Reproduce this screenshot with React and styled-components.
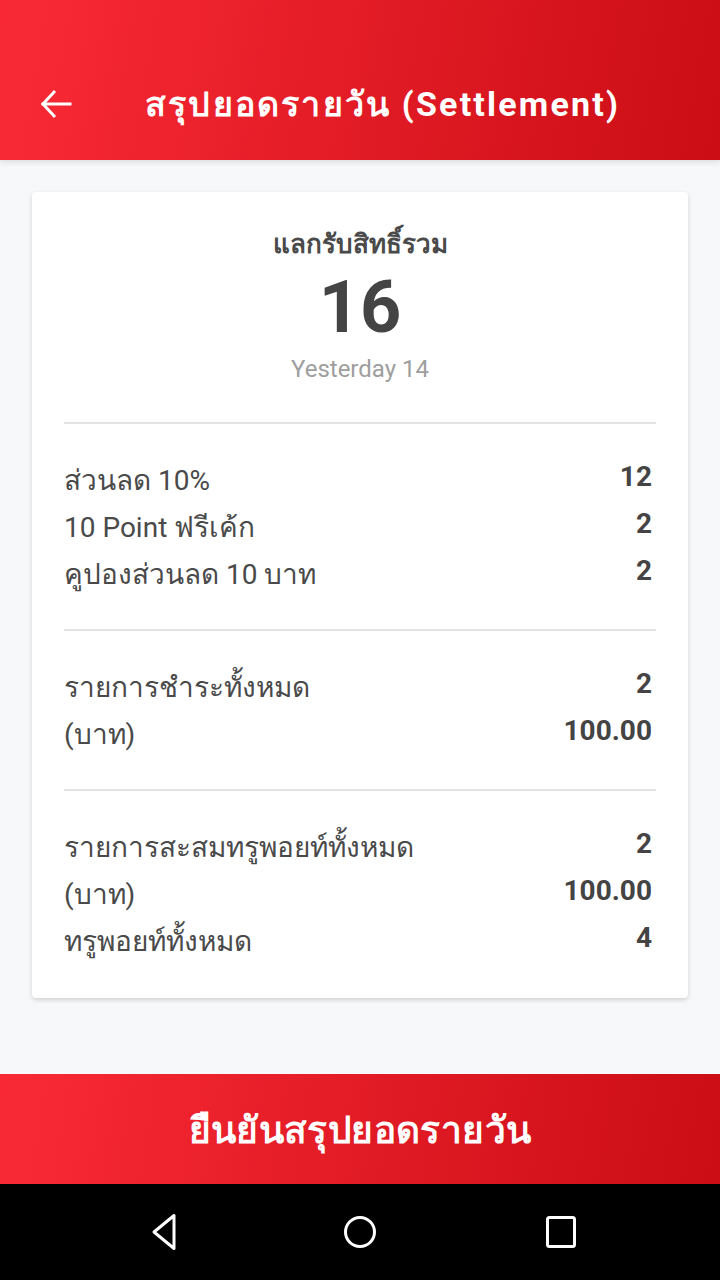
import styled, { createGlobalStyle } from "styled-components"

const GlobalStyle = createGlobalStyle`
    body {
        margin: 0;
        background: #f7f8fa;
        font-family: Roboto, "Noto Sans", "DejaVu Sans", sans-serif;
    }
`
const Page = styled.div`
    display: flex;
    flex-direction: column;
    min-height: 100vh;
    background: #f7f8fa;
`
const Header = styled.header`
    display: flex;
    align-items: center;
    height: 160px;
    box-sizing: border-box;
    padding: 48px 0 0 40px;
    background: linear-gradient(100deg, #f92a36 0%, #cb0d15 100%);
    box-shadow: 0 2px 6px rgba(0, 0, 0, 0.12);
    color: #fff;
    position: relative;
    z-index: 1;
`
const BackButton = styled.div`
    display: flex;
    width: 32px;
    height: 32px;
    cursor: pointer;
`
const HeaderTitle = styled.h1`
    margin: 0 0 0 73px;
    font-size: 34px;
    font-weight: 700;
    letter-spacing: 2.2px;
    white-space: nowrap;
`
const Content = styled.main`
    flex: 1;
    padding: 32px 32px 40px;
`
const Card = styled.section`
    background: #fff;
    border-radius: 4px;
    box-shadow: 0 2px 4px rgba(0, 0, 0, 0.16);
    padding: 0 32px;
`
const Summary = styled.div`
    display: flex;
    flex-direction: column;
    align-items: center;
    padding: 32px 0 38px;
    border-bottom: 2px solid #e3e3e3;
`
const SummaryTitle = styled.div`
    font-size: 26px;
    line-height: 40px;
    font-weight: 700;
    color: #4a4a4a;
`
const Total = styled.div`
    margin-top: 4px;
    font-size: 72px;
    line-height: 80px;
    font-weight: 700;
    color: #444;
`
const Sub = styled.div`
    margin-top: 6px;
    font-size: 24px;
    line-height: 30px;
    color: #9e9e9e;
`
const Section = styled.div`
    padding: ${(props) => (props.last ? "32px 0 34px" : "32px 0")};
    border-bottom: ${(props) => (props.last ? "none" : "2px solid #e3e3e3")};
`
const Row = styled.div`
    display: flex;
    justify-content: space-between;
    align-items: center;
    height: 47px;
`
const Label = styled.span`
    font-size: 28px;
    color: #4a4a4a;
`
const Value = styled.span`
    font-size: 28px;
    font-weight: 700;
    color: #444;
    padding-right: 4px;
    margin-top: -6px;
`
const ConfirmButton = styled.button`
    display: flex;
    align-items: center;
    justify-content: center;
    height: 110px;
    border: none;
    background: linear-gradient(100deg, #f92a36 0%, #cb0d15 100%);
    color: #fff;
    font-family: inherit;
    font-size: 37px;
    font-weight: 700;
    letter-spacing: 0.4px;
    cursor: pointer;
`
const NavBar = styled.nav`
    display: flex;
    justify-content: center;
    align-items: center;
    gap: 161px;
    height: 96px;
    background: #000;
`
const NavIcon = styled.svg`
    width: 40px;
    height: 40px;
`

const sections = [
    [
        ["ส่วนลด 10%", "12"],
        ["10 Point ฟรีเค้ก", "2"],
        ["คูปองส่วนลด 10 บาท", "2"],
    ],
    [
        ["รายการชำระทั้งหมด", "2"],
        ["(บาท)", "100.00"],
    ],
    [
        ["รายการสะสมทรูพอยท์ทั้งหมด", "2"],
        ["(บาท)", "100.00"],
        ["ทรูพอยท์ทั้งหมด", "4"],
    ],
]

export default function App() {
    return (
        <Page>
            <GlobalStyle />
            <Header>
                <BackButton>
                    <svg width="32" height="32" viewBox="0 0 32 32" fill="none" stroke="#fff" strokeWidth="3" strokeLinecap="square">
                        <path d="M3 16H30" />
                        <path d="M15 3L3 16L15 29" strokeLinecap="butt" />
                    </svg>
                </BackButton>
                <HeaderTitle>สรุปยอดรายวัน (Settlement)</HeaderTitle>
            </Header>
            <Content>
                <Card>
                    <Summary>
                        <SummaryTitle>แลกรับสิทธิ์รวม</SummaryTitle>
                        <Total>16</Total>
                        <Sub>Yesterday 14</Sub>
                    </Summary>
                    {sections.map((rows, i) => (
                        <Section key={i} last={i === sections.length - 1}>
                            {rows.map(([label, value], j) => (
                                <Row key={j}>
                                    <Label>{label}</Label>
                                    <Value>{value}</Value>
                                </Row>
                            ))}
                        </Section>
                    ))}
                </Card>
            </Content>
            <ConfirmButton>ยืนยันสรุปยอดรายวัน</ConfirmButton>
            <NavBar>
                <NavIcon viewBox="0 0 40 40" fill="none" stroke="#fff" strokeWidth="3" strokeLinejoin="round">
                    <path d="M35 3.5V36.5L15 20Z" />
                </NavIcon>
                <NavIcon viewBox="0 0 40 40" fill="none" stroke="#fff" strokeWidth="3">
                    <circle cx="20" cy="20" r="14.5" />
                </NavIcon>
                <NavIcon viewBox="0 0 40 40" fill="none" stroke="#fff" strokeWidth="3">
                    <rect x="6.5" y="5.5" width="27" height="29" rx="2" />
                </NavIcon>
            </NavBar>
        </Page>
    )
}
